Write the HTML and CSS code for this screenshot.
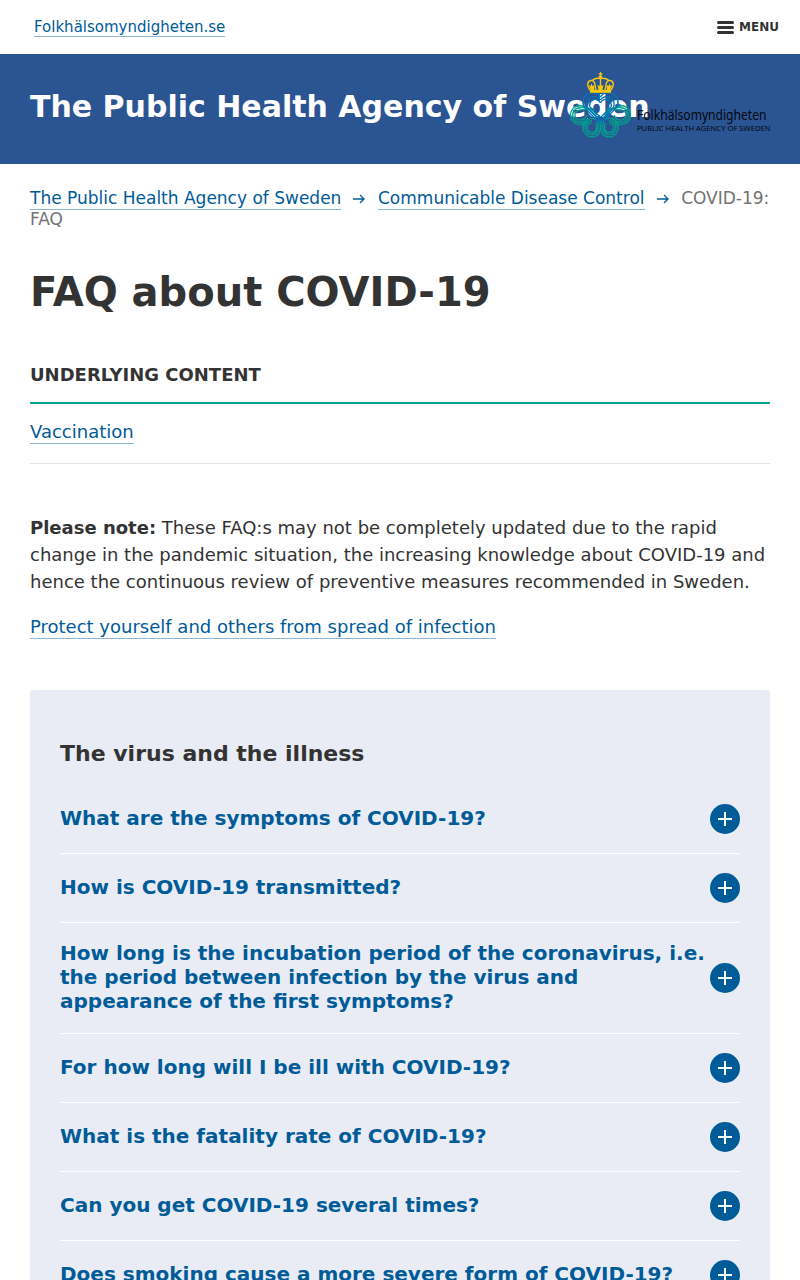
FILE: index.html
```html
<!DOCTYPE html>
<html lang="en">
<head>
<meta charset="utf-8">
<title>FAQ about COVID-19</title>
<link rel="stylesheet" href="styles.css">
</head>
<body>
<div class="topbar">
  <a class="link site" href="#">Folkhälsomyndigheten.se</a>
  <button class="menu"><span class="bars"><i></i><i></i><i></i></span>MENU</button>
</div>
<header class="banner">
  <div class="title">The Public Health Agency of Sweden</div>
  <svg class="logo" viewBox="0 0 202 68" role="img" aria-label="Folkhälsomyndigheten">
    <g fill="none" stroke="#00a390" stroke-width="1.350">
      <g id="half">
        <path d="M28 46C24 44 19 34 10 33.500A9.500 9.500 0 1 0 10 52.500C14 52.500 17 51 19 49"/>
        <path d="M27 43C21 35 17 35.700 10 35.700A7.300 7.300 0 1 0 10 50.300C14 50.300 17 49 18 46"/>
        <path d="M24 37C18 36 16 37.900 10 37.900A5.100 5.100 0 1 0 10 48.100C14 48.100 16 46 17 43"/>
        <path d="M30 49C31 57 30 64.800 22 64.800A9.200 9.200 0 1 1 22 46.400C25 46.400 28 49 30 52"/>
        <path d="M28 49C29 55 28 62.600 22 62.600A7 7 0 1 1 22 48.600"/>
        <path d="M26 51C27 56 27 60.400 22 60.400A4.800 4.800 0 1 1 22 50.800"/>
      </g>
      <use href="#half" transform="translate(61 0) scale(-1 1)"/>
    </g>
    <g fill="none" stroke="#0077b8" stroke-width="1.350">
      <g id="lobe">
        <path d="M30.500 25A9.500 9.500 0 1 0 16 37L30.500 52"/>
        <path d="M30.500 28A7.300 7.300 0 1 0 18 36L30.500 48.800"/>
        <path d="M30.500 31A5.100 5.100 0 1 0 20 35L30.500 45.600"/>
      </g>
      <use href="#lobe" transform="translate(61 0) scale(-1 1)"/>
    </g>
    <g fill="#f9c80e">
      <path d="M30 0h1v1.300h1.500v1.200H31V4h-1V2.500h-1.500V1.300H30z"/>
      <circle cx="30.500" cy="4.800" r="1.700"/>
      <path d="M20 17.800h21v3H20z"/>
      <path d="M18.500 13l2 1 1-2.500 1 2.500 2-1-.5 5h-3zM42.500 13l-2 1-1-2.500-1 2.500-2-1 .5 5h3zM27.500 13l2 1 1-2.500 1 2.500 2-1-1 5h-4z"/>
    </g>
    <g fill="none" stroke="#f9c80e" stroke-width="1.400">
      <path d="M20.500 18.500C15.500 13 18 8 22 8.500C26 9 24.500 14 26 18M40.500 18.500C45.500 13 43 8 39 8.500C35 9 36.500 14 35 18M22 8.500C25 6 28 6 30.500 6.500C33 6 36 6 39 8.500M30.500 6V18"/>
    </g>
    <text class="logo-name" x="67" y="47.500" textLength="129.500" lengthAdjust="spacingAndGlyphs">Folkhälsomyndigheten</text>
    <text class="logo-sub" x="67" y="59" textLength="133.500" lengthAdjust="spacingAndGlyphs">PUBLIC HEALTH AGENCY OF SWEDEN</text>
  </svg>
</header>
<main>
  <nav class="crumbs"><a class="link" href="#">The Public Health Agency of Sweden</a><svg class="arrow" viewBox="0 0 12 10"><path d="M0 5h11M7 1l4 4-4 4"/></svg><a class="link" href="#">Communicable Disease Control</a><svg class="arrow" viewBox="0 0 12 10"><path d="M0 5h11M7 1l4 4-4 4"/></svg>COVID-19: FAQ</nav>
  <h1>FAQ about COVID-19</h1>
  <section class="underlying">
    <h2>UNDERLYING CONTENT</h2>
    <div class="row"><a class="link" href="#">Vaccination</a></div>
  </section>
  <p class="note"><strong>Please note:</strong> These FAQ:s may not be completely updated due to the rapid change in the pandemic situation, the increasing knowledge about COVID-19 and hence the continuous review of preventive measures recommended in Sweden.</p>
  <p class="protect"><a class="link" href="#">Protect yourself and others from spread of infection</a></p>
  <section class="faq">
    <h2>The virus and the illness</h2>
    <div class="item"><span>What are the symptoms of COVID-19?</span><i class="plus"></i></div>
    <div class="item"><span>How is COVID-19 transmitted?</span><i class="plus"></i></div>
    <div class="item"><span>How long is the incubation period of the coronavirus, i.e. the period between infection by the virus and appearance of the first symptoms?</span><i class="plus"></i></div>
    <div class="item"><span>For how long will I be ill with COVID-19?</span><i class="plus"></i></div>
    <div class="item"><span>What is the fatality rate of COVID-19?</span><i class="plus"></i></div>
    <div class="item"><span>Can you get COVID-19 several times?</span><i class="plus"></i></div>
    <div class="item"><span>Does smoking cause a more severe form of COVID-19?</span><i class="plus"></i></div>
  </section>
</main>
</body>
</html>
```
FILE: styles.css
```css
* { box-sizing: border-box; }
html { overflow: hidden; height: 100%; }
body {
  margin: 0;
  height: 1280px;
  overflow: hidden;
  background: #fff;
  color: #333;
  font: 18px/27px "DejaVu Sans", sans-serif;
}
h1, h2, p { margin: 0; }
.link {
  padding-bottom: 1px;
  color: #005b99;
  text-decoration: none;
  border-bottom: 1px solid #8db5d3;
}
.topbar {
  display: flex;
  justify-content: space-between;
  align-items: center;
  height: 54px;
  padding: 0 21px 0 34px;
}
.site { padding-bottom: 0; font-size: 15px; line-height: 18px; }
.menu {
  display: flex;
  align-items: center;
  gap: 5px;
  padding: 0;
  border: 0;
  background: none;
  color: #333;
  font: bold 12px/18px "DejaVu Sans", sans-serif;
}
.bars { display: grid; gap: 2px; width: 17px; }
.bars i { height: 3px; border-radius: 1.5px; background: #333; }
.banner {
  position: relative;
  display: flex;
  align-items: center;
  height: 110px;
  padding: 0 30px 5px;
  background: #2b5493;
}
.title {
  color: #fff;
  font-size: 30px;
  font-weight: bold;
  line-height: 36px;
  white-space: nowrap;
}
.logo {
  position: absolute;
  top: 18px;
  right: 28.5px;
  width: 202px;
  height: 68px;
  overflow: visible;
}
.logo-name { font: 13.5px "Noto Sans", sans-serif; fill: #05080d; }
.logo-sub { font: 7.5px "Noto Sans", sans-serif; fill: #05080d; }
main { padding: 24px 30px 0; }
.crumbs { font-size: 17px; line-height: 21px; color: #737373; }
.arrow {
  width: 12px;
  height: 10px;
  margin: 0 12.6px 0 12px;
  fill: none;
  stroke: #005b99;
  stroke-width: 1.3;
}
h1 { margin-top: 38px; font-size: 40px; line-height: 48px; }
.underlying { margin-top: 45px; }
.underlying h2 {
  padding-bottom: 14px;
  border-bottom: 2px solid #00a390;
  border-radius: 1px;
  font-size: 18px;
  line-height: 27px;
}
.row { height: 60px; padding-top: 14px; border-bottom: 1px solid #e2e2e2; }
.note { margin-top: 50px; }
.protect { margin-top: 18px; }
.faq {
  margin-top: 50px;
  padding: 50px 30px;
  border-radius: 4px;
  background: #e9ecf4;
}
.faq h2 { margin-bottom: 18px; font-size: 22px; line-height: 27px; }
.item {
  display: flex;
  justify-content: space-between;
  align-items: center;
  padding: 19px 0;
  border-bottom: 1px solid #fff;
  color: #005b99;
  font-size: 20px;
  font-weight: bold;
  line-height: 24px;
}
.item span { margin: -1px 0 1px; }
.plus {
  flex: none;
  width: 30px;
  height: 30px;
  border-radius: 50%;
  background:
    linear-gradient(#fff, #fff) 50% 50% / 14px 2px no-repeat,
    linear-gradient(#fff, #fff) 50% 50% / 2px 14px no-repeat,
    #005b99;
}
```
